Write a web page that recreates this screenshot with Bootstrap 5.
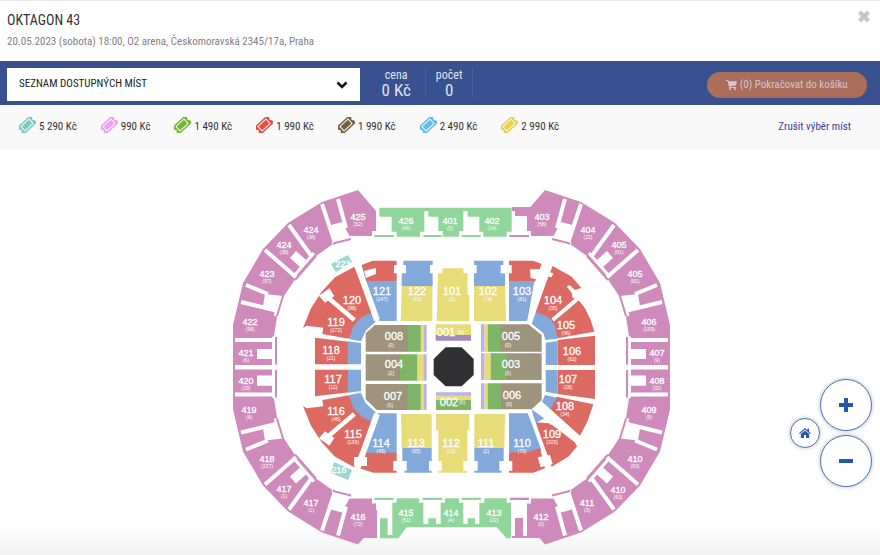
<!DOCTYPE html>
<html lang="cs">
<head>
<meta charset="utf-8">
<meta name="viewport" content="width=device-width, initial-scale=1">
<title>OKTAGON 43</title>
<link href="https://cdn.jsdelivr.net/npm/bootstrap@5.3.0/dist/css/bootstrap.min.css" rel="stylesheet">
<style>
body{font-family:"Roboto Condensed","Liberation Sans Narrow",Roboto,sans-serif;font-size:11px;line-height:16px;color:#333;background:#fff;border-top:1px solid #e8e8e8;min-height:100vh}
.event-head{padding:9px 8px 11px 7px}
.event-title{font-size:14px;line-height:20px;margin:0 0 4px;font-weight:400;color:#33333c}
.event-info{margin:0;color:#808085}
.close-btn{border:0;background:none;padding:0;line-height:0}
.order-bar{background:#3a5190;color:#dfe4f3;padding:7px 13px 4px 7px}
.seat-select{width:41%;height:33px;border:0;border-radius:0;padding:0 40px 0 12px;font-size:11px;color:#222;background-position:right 12px center;background-size:12px 12px;
background-image:url("data:image/svg+xml,%3Csvg xmlns='http://www.w3.org/2000/svg' viewBox='0 0 12 12'%3E%3Cpath d='M1.5 3.5 6 8l4.500-4.500' fill='none' stroke='%23111' stroke-width='2.600'/%3E%3C/svg%3E")}
.sum-cell{padding:0 10px;border-right:1px solid #4a61a0;height:30px;line-height:14px;text-align:center;font-size:12px}
.sum-cell:first-child{padding:0 14px}
.sum-cell b{display:block;font-weight:400;font-size:17px;line-height:16px}
.cart-btn,.cart-btn:disabled{background:#aa6e5b;color:#d3c6d2;border:0;border-radius:13px;height:26px;width:160px;padding:0;font-size:11px;line-height:26px;opacity:1}
.price-bar{background:#f9f9f9;padding:12px 29px 12px 19px;line-height:20px}
.price-list{gap:24px}
.price-item{gap:3px}
.clear-link{color:#3c3f96;text-decoration:none}
.map-area{background:linear-gradient(#fff 93%,#f2f2f2)}
.arena{display:block;width:100%;height:auto;font-family:"Liberation Sans",sans-serif;fill:#fff;text-anchor:middle}
.t4{font-size:9px;stroke:#fff;stroke-width:.3px}.t1{font-size:11px;stroke:#fff;stroke-width:.3px}.ts{font-size:5px}
.pk{fill:#ce8abb}.gr{fill:#90d69b}.rd{fill:#dc6a62}.bl{fill:#83a9da}.ye{fill:#e8dc78}.ol{fill:#9e937b}.fg{fill:#7eb566}.li{fill:#b9b3ec}.pu{fill:#a58ac0}.te{fill:#9dd5cf}.wh{fill:#fff}
.cut{stroke:#fff;fill:none}.strip{stroke:#ce8abb;fill:none;stroke-width:2}
.map-tools{position:absolute;right:8px;bottom:68px}
.round-btn{background:#fff;border:1px solid #4a78b5;border-radius:50%;box-shadow:0 0 4px #bbb;padding:0;width:52px;height:52px;display:flex;align-items:center;justify-content:center}
.home-btn{width:30px;height:30px}
</style>
</head>
<body>
<header class="event-head d-flex justify-content-between align-items-start">
  <div><h1 class="event-title">OKTAGON 43</h1><p class="event-info">20.05.2023 (sobota) 18:00, O2 arena, Českomoravská 2345/17a, Praha</p></div>
  <button type="button" class="close-btn" aria-label="Zavřít"><svg width="16" height="13" viewBox="0 0 16 13"><path d="M3.500 2l9 9M12.500 2l-9 9" stroke="#c6c6c6" stroke-width="4"/></svg></button>
</header>
<section class="order-bar d-flex align-items-start">
  <select class="form-select seat-select" aria-label="Seznam dostupných míst"><option>SEZNAM DOSTUPNÝCH MÍST</option></select>
  <div class="d-flex ms-2">
    <div class="sum-cell">cena<b>0 Kč</b></div>
    <div class="sum-cell">počet<b>0</b></div>
  </div>
  <button type="button" class="btn cart-btn ms-auto mt-1" disabled><svg width="11" height="10" viewBox="0 0 11 10" fill="#d3c6d2"><path d="M0 0h2.200l.4 1.200H11L10 5.600 4 6.300l.2.800H10v1H3.300L1.600 1H0z"/><circle cx="4" cy="9" r="1"/><circle cx="9" cy="9" r="1"/></svg> (0) Pokračovat do košíku</button>
</section>
<section class="price-bar d-flex align-items-center justify-content-between">
  <svg width="0" height="0" class="d-none"><defs><g id="ticket"><g transform="rotate(-43 8 8)"><path d="M-1 3H17V6.300A1.800 1.800 0 0 0 17 9.700V13H-1V9.700A1.800 1.800 0 0 0-1 6.300z"/><path d="M2.500 5h11v6h-11z" fill="none" stroke="#f9f9f9" stroke-width="1"/></g></g></defs></svg>
  <div class="price-list d-flex">
    <div class="price-item d-flex"><svg width="17" height="16" fill="#7cc8c3"><use href="#ticket"/></svg>5 290 Kč</div>
    <div class="price-item d-flex"><svg width="17" height="16" fill="#ef9df0"><use href="#ticket"/></svg>990 Kč</div>
    <div class="price-item d-flex"><svg width="17" height="16" fill="#72b62f"><use href="#ticket"/></svg>1 490 Kč</div>
    <div class="price-item d-flex"><svg width="17" height="16" fill="#e64b43"><use href="#ticket"/></svg>1 990 Kč</div>
    <div class="price-item d-flex"><svg width="17" height="16" fill="#745f41"><use href="#ticket"/></svg>1 990 Kč</div>
    <div class="price-item d-flex"><svg width="17" height="16" fill="#5dbdf1"><use href="#ticket"/></svg>2 490 Kč</div>
    <div class="price-item d-flex"><svg width="17" height="16" fill="#e5cf4b"><use href="#ticket"/></svg>2 990 Kč</div>
  </div>
  <a href="#" class="clear-link">Zrušit výběr míst</a>
</section>
<main class="map-area position-relative">
<svg class="arena" viewBox="0 149 880 406" role="img" aria-label="Mapa arény">
<defs>
<g id="quarter">
  <path class="pk" d="M358 190 322 202 288 223 263 249 243 283 233 325V367.500H272V337L274 336 277 317 282 299 296 278 316 256 333 244 352 236 372 236V231H376V211z"/>
  <g class="cut" stroke-width="4">
    <path d="M322 204 335 243M338 199 346 228"/>
    <path d="M289 225 312 257M265 250 297 278M246 285 268 294M241 302 278 311" />
    <path d="M235 340H274M235 367H274M257 351H274" />
    <path d="M314 253 293 277M332 244 352 237M282 297 275 316" stroke-width="3"/>
  </g>
  <path class="wh" d="M331 225 342 222 351 239 335 244zM296 251 306 260 300 267 290 258zM265 294 283 296 277 314 263 306zM257 349H273V359H257z"/>
  <path class="strip" d="M333 244 335 243 351 239M316 256 295 280M283 296 277 316M276 337V364.500"/>
</g>
</defs>
<use href="#quarter"/>
<use href="#quarter" transform="matrix(1 0 0 -1 0 734.500)"/>
<use href="#quarter" transform="matrix(-1 0 0 1 903 0)"/>
<use href="#quarter" transform="matrix(-1 0 0 -1 903 734.500)"/>
<path class="pk" d="M352 510H377V538H352zM527 510H551V538H527zM512 536H530V538H512zM515 518H523V537H515zM512 207H532L527 231V216H515V211H512z"/>
<!-- outer green stands, top -->
<g transform="translate(360 185) scale(.333333)">
  <path class="gr" d="M58 68H455V140H440V155H370V140H358V95H323V78H310V138H297V155H248V138H235V95H205V78H193V140H180V155H110V140H95V95H58zM43 150H102V156H43zM190 150H245V156H190zM305 150H362V156H305z"/>
  <path class="pk" d="M448 150H507V156H448z"/>
  <path class="rd" d="M5 240 38 227H110V240H102V265H110V290H18zM447 227H520L545 237 525 290H447V265H455V240H447z"/>
  <path class="bl" d="M18 288H110V408H58zM130 227H218V240H210V265H218V304H125V265H138V240H130zM342 227H430V240H422V265H435V304H342V265H350V240H342zM447 288H523L502 408H447z"/>
  <path class="ye" d="M125 303H217V408H122zM247 250H310V265H323V330H328V408H230L234 265H247zM342 303H435L438 408H342z"/>
</g>
<!-- lower stands and outer green stands, bottom -->
<g transform="translate(355 405) scale(.333333)">
  <path class="gr" d="M125 280H192V293H205V357H220V340H243V357H257V293H270V280H312V293H325V357H338V340H360V357H373V293H388V280H455V293H468V400H455L425 367H155L130 400H75V340H98V390H112V293H125zM58 278H116V285H58zM203 278H262V285H203zM320 278H378V285H320z"/>
  <path class="pk" d="M465 278H522V285H465z"/>
  <path class="bl" d="M68 25H125V145H15zM462 25H518L565 130 550 145H462zM142 127H230V203H148V197H142zM358 127H446V197H440V203H358z"/>
  <path class="rd" d="M20 143H125V203H55L2 186zM462 143 520 140 555 130 570 190 535 203H462z"/>
  <path class="ye" d="M138 27H230V129H140zM243 27H343V75H337V203H250V75H243zM358 27H450L448 129H358z"/>
  <path class="wh" d="M115 168H155V197H115zM222 168H260V197H222zM325 168H368V197H325zM433 168H472V197H433z"/>
</g>
<!-- left lower bowl -->
<defs><g id="bowl-left" transform="translate(225 180) scale(.333333)">
  <path class="rd" d="M388 260 330 292 290 335 258 385 234 444 245 437 295 443 292 462 372 476 390 440 446 402zM270 473 372 485V553H270z"/>
  <path class="bl" d="M444 396 410 412 385 438 372 477 408 484 422 452 452 425zM368 484 408 489V553H368z"/>
  <path class="cut" stroke-width="13" d="M300 345 388 420"/>
  <path class="wh" d="M282 347 313 325 328 348 300 368z"/>
</g></defs>
<use href="#bowl-left"/>
<use href="#bowl-left" transform="matrix(1 0 0 -1 0 734)"/>
<g class="cut" stroke-width="6"><path d="M355 259 377 320M355 475 377 414"/></g>
<path class="wh" d="M364 271 376 268V274L366 278zM354 457H367V466H354z"/>
<!-- right lower bowl -->
<g transform="translate(500 180) scale(.333333)">
  <path class="rd" d="M158 258 215 290 245 325 232 335 228 350 255 385 272 420 283 455 172 475 150 420 100 400zM173 480 285 467V555H173z"/>
  <path class="bl" d="M104 395 140 408 165 435 172 476 136 480 130 460 88 425zM137 488 173 483V555H137z"/>
  <path class="cut" stroke-width="12" d="M158 420 240 350"/>
  <path class="wh" d="M200 320 208 315 225 330 245 323 242 355 218 355 215 338zM90 268H120L160 280 155 292 137 287 120 300 92 294z"/>
  <path class="cut" stroke-width="16" d="M148 255 87 430"/>
</g>
<g transform="translate(500 365) scale(.333333)">
  <path class="rd" d="M173 15H285V102L173 87zM170 95 280 118 262 170 240 212 148 130zM103 172 150 175 235 240 205 275 155 305z"/>
  <path class="bl" d="M137 15H173V87L137 80zM135 90 171 98 151 132 126 110zM95 133 132 160 105 176z"/>
  <path class="wh" d="M100 113H128L178 160 152 180zM222 225 238 213 248 232 230 244zM113 277 150 270 158 297 122 307z"/>
  <path class="cut" stroke-width="12" d="M88 138 140 282M150 142 235 220"/>
</g>
<!-- floor -->
<g transform="translate(355 310) scale(.333333)">
  <path class="ol" d="M32 70 60 45H160V125H32zM32 133H136V212H32zM32 222H160V300H65L32 268zM435 43H520L560 75V125H435zM453 130H560V210H453zM435 220H560V270L530 298H435z"/>
  <path class="fg" d="M158 45H198V125H158zM135 133H188V212H135zM158 222H198V300H158zM397 43H437V125H397zM406 130H455V210H406zM397 220H437V298H397zM243 270H348V300H243z"/>
  <path class="ye" d="M197 45H207V125H197zM187 133H205V212H187zM197 222H207V300H197zM388 43H398V125H388zM388 130H407V210H388zM388 220H398V298H388zM242 43H348V76H242zM243 256H348V270H243z"/>
  <path class="li" d="M207 45H215V125H207zM205 133H215V212H205zM207 222H215V300H207zM378 43H388V125H378zM378 130H388V210H378zM378 220H388V298H378zM243 247H348V257H243z"/>
  <path class="pu" d="M242 75H348V92H242z"/>
  <path fill="#303032" d="M272 112H320L356 147V195L320 229H272L236 195V147z"/>
</g>
<path class="te" d="M331 264 348 255 352 262 336 272zM334 462 352 470 348 480 331 473z"/>
<g id="labels"></g>
</svg>
<div class="map-tools d-flex align-items-center">
  <button type="button" class="round-btn home-btn" aria-label="Celá mapa"><svg width="12" height="10" viewBox="0 0 12 10" fill="#2758a5"><path d="M6 0 8.500 2.200V.5H10V3.500L12 5.300 11.300 6 6 1.500.7 6 0 5.300zM6 2.500 10.200 6V10H7V7H5V10H1.800V6z"/></svg></button>
  <div class="d-flex flex-column gap-1">
    <button type="button" class="round-btn" aria-label="Přiblížit"><svg width="14" height="14"><path d="M7 0V14M0 7H14" stroke="#2758a5" stroke-width="4"/></svg></button>
    <button type="button" class="round-btn" aria-label="Oddálit"><svg width="14" height="14"><path d="M0 7H14" stroke="#2758a5" stroke-width="4"/></svg></button>
  </div>
</div>
</main>
<script>
// number, seats, x centre, baseline
const sectors = [
 [425,52,358,220],[424,38,311,233],[424,38,284,248],[423,57,267,277],[422,98,250,325],[421,6,246,356],[420,29,246,384],[419,4,249,413],[418,157,267,462],[417,1,284,492],[417,1,311,506],[416,72,358,520],
 [426,46,406,224],[401,5,450,224],[402,34,492,224],[403,58,542,220],[404,22,588,233],[405,61,619,248],[405,81,635,277],[406,159,649,325],[407,9,657,356],[408,32,657,384],[409,5,649,413],[410,63,635,462],[410,63,618,493],[411,3,587,506],[412,0,541,520],
 [415,51,406,516],[414,4,451,516],[413,22,494,516],
 [121,147,382,295],[122,63,417,295],[101,0,452,295],[102,78,488,295],[103,81,522,295],[120,98,352,304],[119,172,336,326],[118,21,331,354],[117,12,333,383],[116,46,336,415],[115,136,353,438],[114,45,381,447],[113,65,416,447],[112,13,451,447],[111,2,486,447],[110,70,522,447],[104,35,553,304],[105,96,566,329],[106,62,572,355],[107,28,568,383],[108,34,565,410],[109,105,552,438],
 ['008',0,394,340],['004',2,394,368],['007',0,393,400],['005',0,511,340],['003',0,511,368],['006',0,512,399],['001','',446,336],['002','',449,406]
];
document.getElementById('labels').innerHTML = sectors.map(([n,s,x,y]) => {
  const upper = n >= 400, low = n < 10;
  return `<text class="${upper?'t4':'t1'}" x="${x}" y="${y}">${n}</text>` +
    (s === '' ? '' : `<text class="ts" x="${low?x-3:x}" y="${y+(low?7:6)}">(${s})</text>`);
}).join('') +
 '<text class="ts" x="461" y="334">(0)</text><text class="ts" x="462" y="404">(0)</text><text class="t4" x="343" y="267">223</text><text class="t4" x="339" y="473">216</text>';
</script>
<script src="https://cdn.jsdelivr.net/npm/bootstrap@5.3.0/dist/js/bootstrap.bundle.min.js"></script>
</body>
</html>
